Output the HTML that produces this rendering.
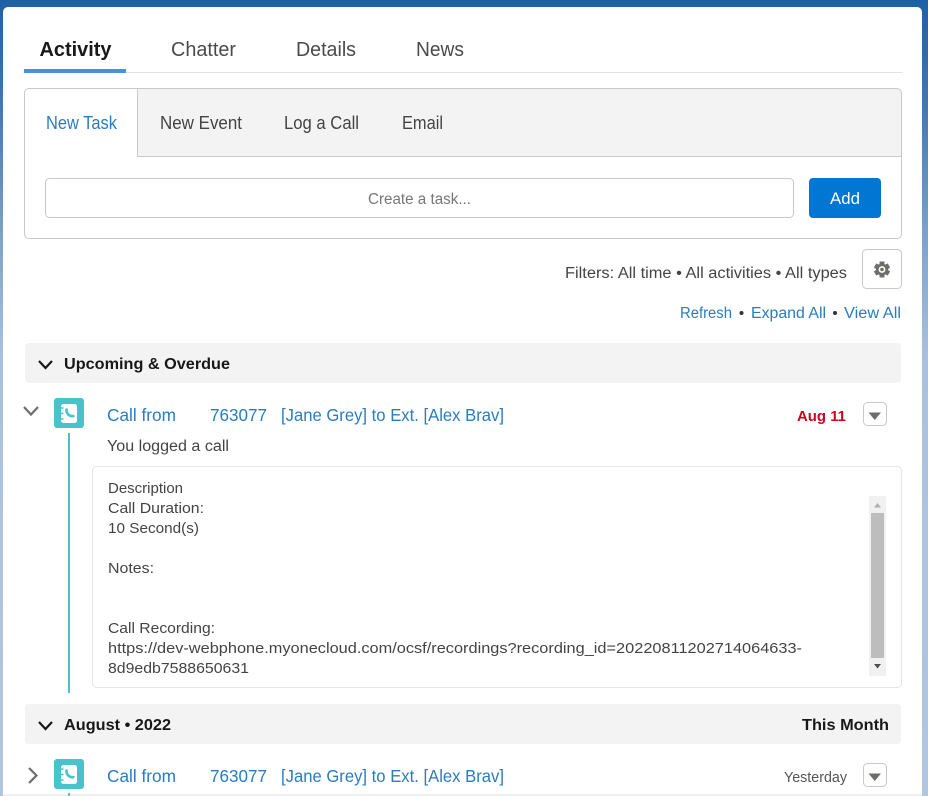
<!DOCTYPE html>
<html lang="en">
<head>
<meta charset="utf-8">
<title>Activity</title>
<style>
html,body{margin:0;padding:0;width:928px;height:796px;overflow:hidden;background:#fff}
svg{display:block;position:absolute;left:0;top:0}
text{font-family:"Liberation Sans",sans-serif;font-size:15.5px;fill:#444}
.l{fill:#2a7cc0}
.b{font-weight:bold;fill:#181818}
.d{font-size:15px}
.t{font-size:18px}
.m{font-size:20px;fill:#4a4a4a}
.r{font-size:17.5px}
</style>
</head>
<body>
<svg width="928" height="796" viewBox="0 0 928 796" xmlns="http://www.w3.org/2000/svg">
<defs>
<linearGradient id="bg" x1="0" y1="0" x2="0" y2="1">
<stop offset="0" stop-color="#1f5fa4"/>
<stop offset=".13" stop-color="#3f78b4"/>
<stop offset=".3" stop-color="#7fa2cc"/>
<stop offset=".45" stop-color="#aac1dd"/>
<stop offset="1" stop-color="#b2c6df"/>
</linearGradient>
</defs>
<rect width="928" height="796" fill="url(#bg)"/>
<rect x="3" y="7" width="919" height="800" rx="5" fill="#fff"/>
<rect x="3" y="794" width="919" height="2" fill="#f0f0f0"/>

<!-- main tabs -->
<rect x="24" y="72" width="878" height="1" fill="#e2e2e2"/>
<rect x="24" y="69" width="102" height="4" fill="#4a90e2"/>
<text x="39.5" y="56" class="b" style="font-size:20.5px" textLength="72" lengthAdjust="spacingAndGlyphs">Activity</text>
<text x="171" y="56" class="m" textLength="65" lengthAdjust="spacingAndGlyphs">Chatter</text>
<text x="296" y="56" class="m" textLength="60" lengthAdjust="spacingAndGlyphs">Details</text>
<text x="416" y="56" class="m" textLength="48" lengthAdjust="spacingAndGlyphs">News</text>

<!-- publisher -->
<path d="M137.5 89H897.5a3.5 3.5 0 0 1 3.5 3.5V156H137.5Z" fill="#f3f3f3"/>
<rect x="24.5" y="88.5" width="877" height="150" rx="4.5" fill="none" stroke="#c9c9c9"/>
<rect x="137" y="89" width="1" height="68" fill="#c9c9c9"/>
<rect x="137" y="156" width="764" height="1" fill="#c9c9c9"/>
<text x="46" y="129" class="l t" textLength="71" lengthAdjust="spacingAndGlyphs">New Task</text>
<text x="160" y="129" class="t" textLength="82" lengthAdjust="spacingAndGlyphs">New Event</text>
<text x="284" y="129" class="t" textLength="75" lengthAdjust="spacingAndGlyphs">Log a Call</text>
<text x="402" y="129" class="t" textLength="41" lengthAdjust="spacingAndGlyphs">Email</text>
<rect x="45.5" y="178.5" width="748" height="39" rx="4" fill="#fff" stroke="#c9c9c9"/>
<text x="368" y="204" style="fill:#777" textLength="103" lengthAdjust="spacingAndGlyphs">Create a task...</text>
<rect x="809" y="178" width="72" height="40" rx="4" fill="#0176d3"/>
<text x="830" y="204" style="fill:#fff;font-size:16.5px" textLength="30" lengthAdjust="spacingAndGlyphs">Add</text>

<!-- filters -->
<text x="565" y="278" textLength="282" lengthAdjust="spacingAndGlyphs">Filters: All time • All activities • All types</text>
<rect x="862.5" y="249.5" width="39" height="39" rx="4" fill="#fff" stroke="#c9c9c9"/>
<g transform="translate(882 269.5)" fill="#706e6b">
<circle r="6"/>
<rect x="-2.5" y="-8" width="5" height="4" rx=".6"/>
<rect x="-2.5" y="-8" width="5" height="4" rx=".6" transform="rotate(60)"/>
<rect x="-2.5" y="-8" width="5" height="4" rx=".6" transform="rotate(120)"/>
<rect x="-2.5" y="-8" width="5" height="4" rx=".6" transform="rotate(180)"/>
<rect x="-2.5" y="-8" width="5" height="4" rx=".6" transform="rotate(240)"/>
<rect x="-2.5" y="-8" width="5" height="4" rx=".6" transform="rotate(300)"/>
<circle r="3.4" fill="#fff"/>
<circle r="1.8"/>
</g>
<text x="680" y="318" class="l" textLength="52" lengthAdjust="spacingAndGlyphs">Refresh</text>
<circle cx="741.5" cy="313" r="2" fill="#333"/>
<text x="751" y="318" class="l" textLength="75" lengthAdjust="spacingAndGlyphs">Expand All</text>
<circle cx="835" cy="313" r="2" fill="#333"/>
<text x="844" y="318" class="l" textLength="57" lengthAdjust="spacingAndGlyphs">View All</text>

<!-- upcoming -->
<rect x="25" y="343" width="876" height="40" rx="4" fill="#f3f3f3"/>
<path d="M39 361l6.500 7 6.500-7" fill="none" stroke="#181818" stroke-width="2.2"/>
<text x="64" y="369" class="b" textLength="166" lengthAdjust="spacingAndGlyphs">Upcoming &amp; Overdue</text>

<path d="M24 407l7 7.500 7-7.500" fill="none" stroke="#706e6b" stroke-width="2.2"/>
<rect x="54" y="398" width="30" height="30" rx="3" fill="#48c3cc"/>
<rect x="61" y="404" width="16" height="19" rx="2.500" fill="#fff"/>
<path d="M60.500 408h3M60.500 413.500h3M60.500 419h3" stroke="#48c3cc" stroke-width="1.400"/>
<path d="M66.500 409.500c-.5 3.800 2.800 7.200 6.800 6.600" fill="none" stroke="#48c3cc" stroke-width="2.600" stroke-linecap="round"/>
<rect x="68" y="433" width="2" height="260" fill="#48c3cc"/>
<text x="107" y="421" class="l r" textLength="69" lengthAdjust="spacingAndGlyphs">Call from</text>
<text x="210" y="421" class="l r" textLength="57" lengthAdjust="spacingAndGlyphs">763077</text>
<text x="281" y="421" class="l r" textLength="223" lengthAdjust="spacingAndGlyphs">[Jane Grey] to Ext. [Alex Brav]</text>
<text x="797" y="421" style="font-size:14.5px;font-weight:bold;fill:#d0021b" textLength="49" lengthAdjust="spacingAndGlyphs">Aug 11</text>
<rect x="863.5" y="402.5" width="23" height="23" rx="4" fill="#fff" stroke="#c9c9c9"/>
<path d="M868.500 412.500h12.500l-6.250 7.500z" fill="#706e6b"/>
<text x="107" y="451" textLength="122" lengthAdjust="spacingAndGlyphs">You logged a call</text>

<rect x="92.5" y="466.5" width="809" height="221" rx="4" fill="#fff" stroke="#e5e5e5"/>
<text x="108" y="493" class="d" textLength="75" lengthAdjust="spacingAndGlyphs">Description</text>
<text x="108" y="513" class="d" textLength="96" lengthAdjust="spacingAndGlyphs">Call Duration:</text>
<text x="108" y="533" class="d" textLength="91" lengthAdjust="spacingAndGlyphs">10 Second(s)</text>
<text x="108" y="573" class="d" textLength="46" lengthAdjust="spacingAndGlyphs">Notes:</text>
<text x="108" y="633" class="d" textLength="107" lengthAdjust="spacingAndGlyphs">Call Recording:</text>
<text x="108" y="653" class="d" textLength="694" lengthAdjust="spacingAndGlyphs">https://dev-webphone.myonecloud.com/ocsf/recordings?recording_id=20220811202714064633-</text>
<text x="108" y="673" class="d" textLength="141" lengthAdjust="spacingAndGlyphs">8d9edb7588650631</text>
<rect x="869" y="496" width="17" height="180" fill="#f1f1f1"/>
<rect x="871" y="513" width="13" height="145" fill="#bdbdbd"/>
<path d="M874 507.500h7l-3.500-4.500z" fill="#b0b0b0"/>
<path d="M874 664h7l-3.500 4.500z" fill="#505050"/>

<!-- august -->
<rect x="25" y="704" width="876" height="40" rx="4" fill="#f3f3f3"/>
<path d="M39 722l6.500 7 6.500-7" fill="none" stroke="#181818" stroke-width="2.2"/>
<text x="64" y="730" class="b" textLength="107" lengthAdjust="spacingAndGlyphs">August • 2022</text>
<text x="802" y="730" class="b" textLength="87" lengthAdjust="spacingAndGlyphs">This Month</text>

<path d="M29 768l7.500 7.500-7.500 7.500" fill="none" stroke="#706e6b" stroke-width="2.2"/>
<rect x="54" y="759" width="30" height="30" rx="3" fill="#48c3cc"/>
<rect x="61" y="765" width="16" height="19" rx="2.500" fill="#fff"/>
<path d="M60.500 769h3M60.500 774.500h3M60.500 780h3" stroke="#48c3cc" stroke-width="1.400"/>
<path d="M66.500 770.500c-.5 3.800 2.800 7.200 6.800 6.600" fill="none" stroke="#48c3cc" stroke-width="2.600" stroke-linecap="round"/>
<rect x="68" y="793" width="2" height="3" fill="#48c3cc"/>
<text x="107" y="782" class="l r" textLength="69" lengthAdjust="spacingAndGlyphs">Call from</text>
<text x="210" y="782" class="l r" textLength="57" lengthAdjust="spacingAndGlyphs">763077</text>
<text x="281" y="782" class="l r" textLength="223" lengthAdjust="spacingAndGlyphs">[Jane Grey] to Ext. [Alex Brav]</text>
<text x="784" y="782" style="font-size:15px;fill:#555" textLength="63" lengthAdjust="spacingAndGlyphs">Yesterday</text>
<rect x="863.5" y="763.5" width="23" height="23" rx="4" fill="#fff" stroke="#c9c9c9"/>
<path d="M868.500 773.500h12.500l-6.250 7.500z" fill="#706e6b"/>
</svg>
</body>
</html>
